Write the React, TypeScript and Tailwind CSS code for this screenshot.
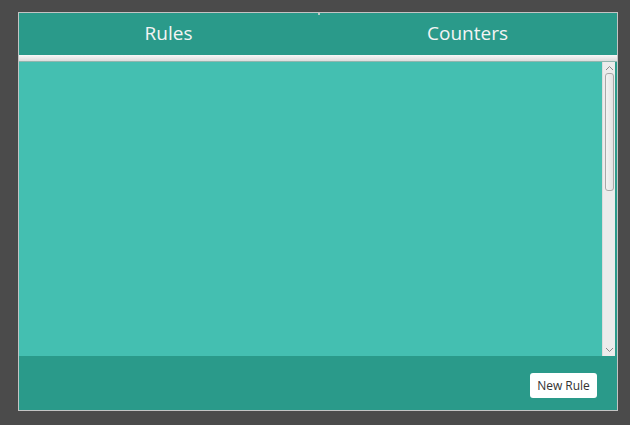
import React from 'react';

const tabs = ['Rules', 'Counters'];

export default function App() {
    return (
        <div className="w-[630px] h-[425px] bg-[#4b4b4b] pt-[12px] pl-[18px]" style={{ fontFamily: '"Open Sans", "Noto Sans", sans-serif' }}>
            <div className="w-[600px] h-[399px] border border-[#c4c4c4] bg-[#2a9a8a] flex flex-col">
                {/* Tabs */}
                <div className="relative h-[42px] grid grid-cols-2 shrink-0">
                    {tabs.map((t) => (
                        <div key={t} className="flex items-center justify-center text-[19px] text-[#f4f4f4] pb-[2px]">
                            {t}
                        </div>
                    ))}
                    <div className="absolute left-[299px] top-0 w-[2px] h-[2px] bg-[#b8c8c4]" />
                </div>
                <div className="h-[7px] shrink-0 bg-gradient-to-b from-[#f8f8f8] to-[#dcdcdc] border-b border-[#8fb5ae]" />

                {/* Rule list */}
                <div className="h-[294px] flex pr-[2px] shrink-0">
                    <div className="flex-1 bg-[#44bfb1]" />
                    <div className="w-[13px] bg-[#ececec] border-l border-[#dcdcdc] flex flex-col items-center">
                        <svg width="9" height="6" viewBox="0 0 9 6" className="mt-[3px]">
                            <path d="M1 5 L4.5 1.5 L8 5" fill="none" stroke="#8a8a8a" strokeWidth="1" />
                        </svg>
                        <div className="mt-[2px] w-[9px] h-[118px] rounded-[3px] border border-[#a8a8a8] bg-gradient-to-r from-[#f4f4f4] to-[#e2e2e2]" />
                        <div className="flex-1" />
                        <svg width="9" height="6" viewBox="0 0 9 6" className="mb-[3px]">
                            <path d="M1 1 L4.5 4.5 L8 1" fill="none" stroke="#8a8a8a" strokeWidth="1" />
                        </svg>
                    </div>
                </div>

                {/* Footer */}
                <div className="flex-1 flex items-start justify-end pr-[20px] pt-[17px]">
                    <button className="bg-white rounded-[3px] h-[25px] w-[67px] text-[12px] text-[#333]">
                        New Rule
                    </button>
                </div>
            </div>
        </div>
    );
}
